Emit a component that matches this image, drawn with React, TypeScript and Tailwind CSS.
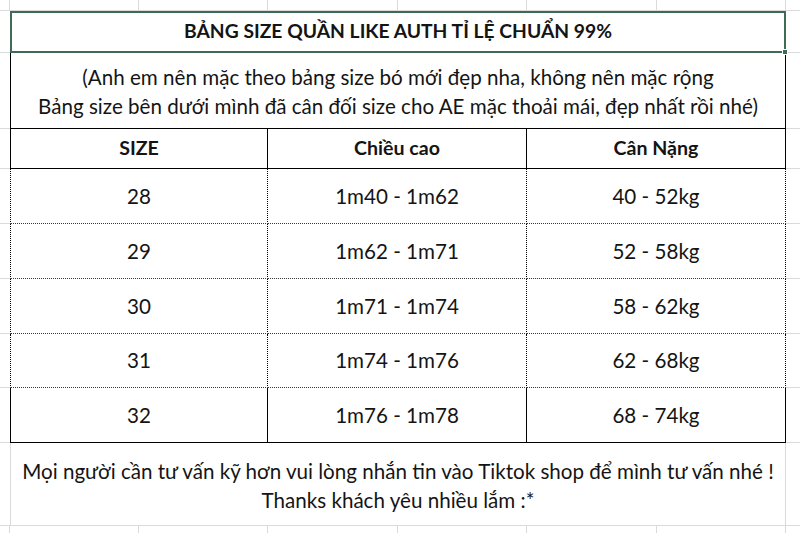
import React from "react";

const FONT = { fontFamily: "Lato, 'Noto Sans', sans-serif" };

const STRIP_COLS = [129, 129, 130, 129, 130, 129];

const SIZES = [
  { size: "28", height: "1m40 - 1m62", weight: "40 - 52kg", h: "h-[55px]" },
  { size: "29", height: "1m62 - 1m71", weight: "52 - 58kg", h: "h-[55px]" },
  { size: "30", height: "1m71 - 1m74", weight: "58 - 62kg", h: "h-[55px]" },
  { size: "31", height: "1m74 - 1m76", weight: "62 - 68kg", h: "h-[54px]" },
  { size: "32", height: "1m76 - 1m78", weight: "68 - 74kg", h: "h-[55px]" },
];

// plain light sheet cells (used above and below the table)
function Strip({ className }: { className: string }) {
  return (
    <div className={`flex ${className}`}>
      <div className="w-[10px] shrink-0 border-r border-b border-[#dadada]" />
      {STRIP_COLS.map((w, i) => (
        <div
          key={i}
          style={{ width: w }}
          className="shrink-0 border-r border-b border-[#dadada]"
        />
      ))}
      <div className="flex-1 border-b border-[#dadada]" />
    </div>
  );
}

function Gutter({ side }: { side: "l" | "r" }) {
  return (
    <div
      className={
        side === "l"
          ? "w-[10px] shrink-0 border-b border-[#dadada]"
          : "flex-1 border-b border-[#dadada]"
      }
    />
  );
}

export default function App() {
  return (
    <div
      className="h-[533px] w-[800px] overflow-hidden bg-white text-[20.6px] text-[#141414]"
      style={FONT}
    >
      <Strip className="h-[11px]" />

      {/* Title (selected cell) */}
      <div className="relative flex h-[42px]">
        <Gutter side="l" />
        <div className="flex w-[776px] shrink-0 items-center justify-center border-2 border-[#3e6a56] pb-[2px] text-[19.3px] font-bold">
          BẢNG SIZE QUẦN LIKE AUTH TỈ LỆ CHUẨN 99%
        </div>
        <Gutter side="r" />
        <div className="absolute left-[782px] top-[38px] h-[6px] w-[6px] border border-white bg-[#3e6a56]" />
      </div>

      {/* Note */}
      <div className="flex h-[76px]">
        <Gutter side="l" />
        <div className="flex w-[776px] shrink-0 flex-col items-center justify-center border-x border-b border-black pt-[2px] leading-[29px]">
          <span>(Anh em nên mặc theo bảng size bó mới đẹp nha, không nên mặc rộng</span>
          <span>Bảng size bên dưới mình đã cân đối size cho AE mặc thoải mái, đẹp nhất rồi nhé)</span>
        </div>
        <Gutter side="r" />
      </div>

      {/* Header */}
      <div className="flex h-[40px] text-[19.6px] font-bold">
        <Gutter side="l" />
        <div className="flex w-[258px] shrink-0 items-center justify-center border-x border-b border-black pb-[1px]">
          SIZE
        </div>
        <div className="flex w-[259px] shrink-0 items-center justify-center border-r border-b border-black pb-[1px]">
          Chiều cao
        </div>
        <div className="flex w-[259px] shrink-0 items-center justify-center border-r border-b border-black pb-[1px]">
          Cân Nặng
        </div>
        <Gutter side="r" />
      </div>

      {SIZES.map((row, i) => {
        const last = i === SIZES.length - 1;
        const bottom = last
          ? "border-b border-solid border-b-black"
          : "border-b border-dotted border-b-[#3a3a3a]";
        return (
          <div key={row.size} className={`flex ${row.h}`}>
            <Gutter side="l" />
            <div className={`flex w-[258px] shrink-0 items-center justify-center border-x border-x-black ${bottom}`}>
              {row.size}
            </div>
            <div className={`flex w-[259px] shrink-0 items-center justify-center border-r border-r-black ${bottom}`}>
              {row.height}
            </div>
            <div className={`flex w-[259px] shrink-0 items-center justify-center border-r border-r-black ${bottom}`}>
              {row.weight}
            </div>
            <Gutter side="r" />
          </div>
        );
      })}

      {/* Footer */}
      <div className="flex h-[83px]">
        <Gutter side="l" />
        <div className="flex w-[776px] shrink-0 flex-col items-center justify-center border-x border-b border-[#dadada] pt-[4px] leading-[29px]">
          <span>Mọi người cần tư vấn kỹ hơn vui lòng nhắn tin vào Tiktok shop để mình tư vấn nhé !</span>
          <span>Thanks khách yêu nhiều lắm :*</span>
        </div>
        <Gutter side="r" />
      </div>

      <Strip className="h-[20px]" />
    </div>
  );
}
